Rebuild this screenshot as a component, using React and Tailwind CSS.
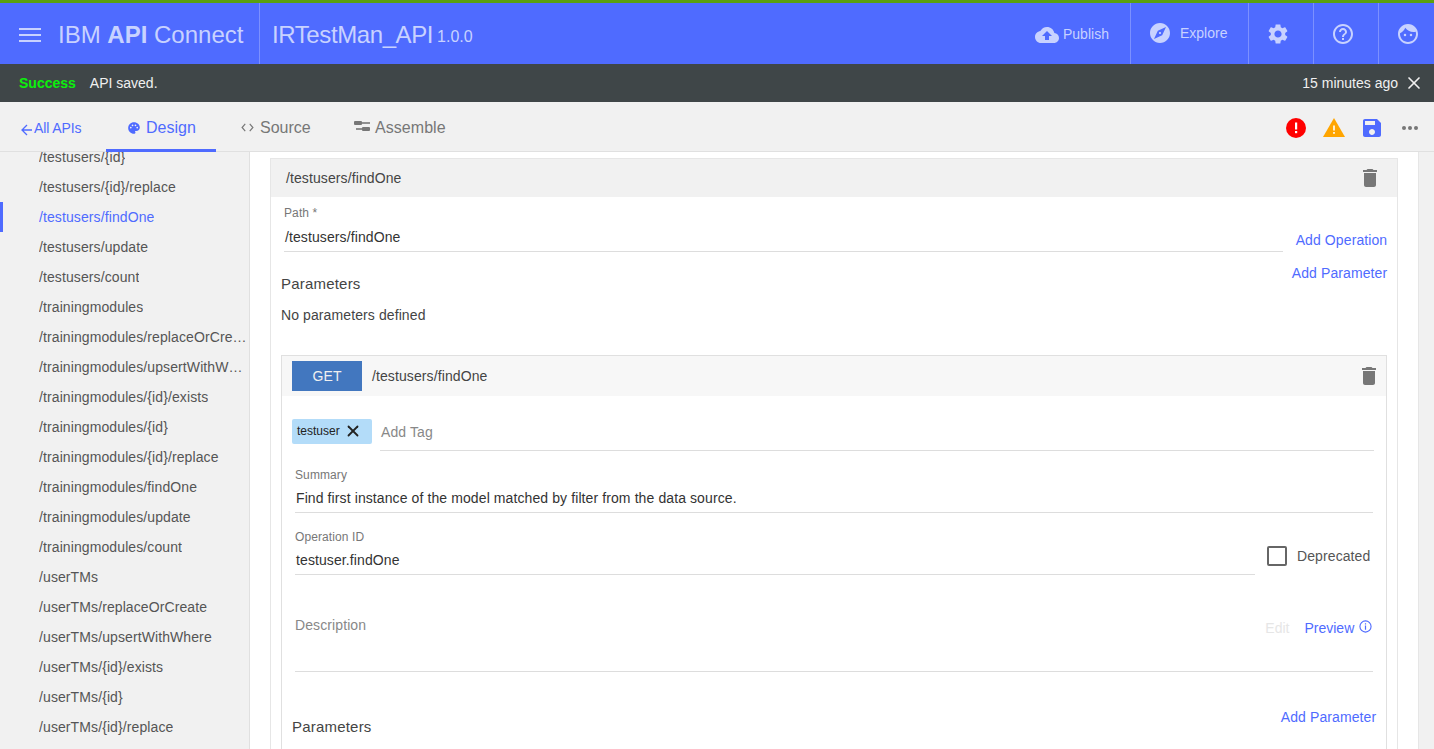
import { X } from "lucide-react";

const navItems = [
  "/testusers/{id}",
  "/testusers/{id}/replace",
  "/testusers/findOne",
  "/testusers/update",
  "/testusers/count",
  "/trainingmodules",
  "/trainingmodules/replaceOrCreate",
  "/trainingmodules/upsertWithWhere",
  "/trainingmodules/{id}/exists",
  "/trainingmodules/{id}",
  "/trainingmodules/{id}/replace",
  "/trainingmodules/findOne",
  "/trainingmodules/update",
  "/trainingmodules/count",
  "/userTMs",
  "/userTMs/replaceOrCreate",
  "/userTMs/upsertWithWhere",
  "/userTMs/{id}/exists",
  "/userTMs/{id}",
  "/userTMs/{id}/replace",
];

const TrashIcon = () => (
  <svg viewBox="0 0 24 24" className="w-[24px] h-[24px] fill-[#777]">
    <path d="M6 19c0 1.1.9 2 2 2h8c1.1 0 2-.9 2-2V7H6v12zM19 4h-3.5l-1-1h-5l-1 1H5v2h14V4z" />
  </svg>
);

const Header = () => (
  <header className="h-[64px] shrink-0 bg-[#4f6bff] border-t-[3px] border-[#5aa00f] flex items-stretch text-[#c8d2ff]">
    <div className="w-[260px] shrink-0 flex items-center border-r border-[#7c90ff] h-[66px] pl-[19px] pb-[2px]">
      <svg viewBox="0 0 22 14" className="w-[22px] h-[14px] fill-[#c8d2ff]">
        <rect y="0" width="22" height="2" />
        <rect y="6" width="22" height="2" />
        <rect y="12" width="22" height="2" />
      </svg>
      <span className="ml-[17px] text-[24px] leading-none whitespace-nowrap">
        IBM <b>API</b> Connect
      </span>
    </div>
    <div className="flex-1 flex items-center pl-[12px] pt-[2px]">
      <span className="text-[24px] leading-none tracking-[-0.4px]">IRTestMan_API</span>
      <span className="ml-[4px] text-[16px] leading-none mt-[5px]">1.0.0</span>
    </div>
    <div className="flex items-stretch text-[14px]">
      <div className="w-[96px] flex items-center pt-[2px]">
        <svg viewBox="0 0 24 24" className="w-[24px] h-[24px] fill-[#c8d2ff] ml-[1px]">
          <path d="M19.35 10.04C18.67 6.59 15.64 4 12 4 9.11 4 6.6 5.64 5.35 8.04 2.34 8.36 0 10.91 0 14c0 3.31 2.69 6 6 6h13c2.76 0 5-2.24 5-5 0-2.64-2.05-4.78-4.65-4.96zM14 13v4h-4v-4H7l5-5 5 5h-3z" />
        </svg>
        <span className="ml-[4px]">Publish</span>
      </div>
      <div className="w-[118px] flex items-center border-l border-[#7c90ff] pl-[17px] pb-[1px]">
        <svg viewBox="0 0 24 24" className="w-[24px] h-[24px] fill-[#c8d2ff]">
          <path d="M12 10.9c-.61 0-1.1.49-1.1 1.1s.49 1.1 1.1 1.1c.61 0 1.1-.49 1.1-1.1s-.49-1.1-1.1-1.1zM12 2C6.48 2 2 6.48 2 12s4.48 10 10 10 10-4.48 10-10S17.52 2 12 2zm2.19 12.19L6 18l3.81-8.19L18 6l-3.81 8.19z" />
        </svg>
        <span className="ml-[8px]">Explore</span>
      </div>
      <div className="w-[65px] flex items-center justify-center border-l border-[#7c90ff] pr-[7px]">
        <svg viewBox="0 0 24 24" className="w-[24px] h-[24px] fill-[#c8d2ff]">
          <path d="M19.14 12.94c.04-.3.06-.61.06-.94 0-.32-.02-.64-.07-.94l2.03-1.58c.18-.14.23-.41.12-.61l-1.92-3.32c-.12-.22-.37-.29-.59-.22l-2.39.96c-.5-.38-1.03-.7-1.62-.94l-.36-2.54c-.04-.24-.24-.41-.48-.41h-3.84c-.24 0-.43.17-.47.41l-.36 2.54c-.59.24-1.13.57-1.62.94l-2.39-.96c-.22-.08-.47 0-.59.22L2.74 8.87c-.12.21-.08.47.12.61l2.03 1.58c-.05.3-.09.63-.09.94s.02.64.07.94l-2.03 1.58c-.18.14-.23.41-.12.61l1.92 3.32c.12.22.37.29.59.22l2.39-.96c.5.38 1.03.7 1.62.94l.36 2.54c.05.24.24.41.48.41h3.84c.24 0 .44-.17.47-.41l.36-2.54c.59-.24 1.13-.56 1.62-.94l2.39.96c.22.08.47 0 .59-.22l1.92-3.32c.12-.22.07-.47-.12-.61l-2.01-1.58zM12 15.6c-1.98 0-3.6-1.62-3.6-3.6s1.62-3.6 3.6-3.6 3.6 1.62 3.6 3.6-1.62 3.6-3.6 3.6z" />
        </svg>
      </div>
      <div className="w-[65px] flex items-center justify-center border-l border-[#7c90ff] pr-[7px]">
        <svg viewBox="0 0 24 24" className="w-[24px] h-[24px] fill-[#c8d2ff]">
          <path d="M11 18h2v-2h-2v2zm1-16C6.48 2 2 6.48 2 12s4.48 10 10 10 10-4.48 10-10S17.52 2 12 2zm0 18c-4.41 0-8-3.59-8-8s3.59-8 8-8 8 3.59 8 8-3.59 8-8 8zm0-14c-2.21 0-4 1.79-4 4h2c0-1.1.9-2 2-2s2 .9 2 2c0 2-3 1.75-3 5h2c0-2.25 3-2.5 3-5 0-2.21-1.79-4-4-4z" />
        </svg>
      </div>
      <div className="w-[56px] flex items-center pl-[17px] border-l border-[#7c90ff]">
        <svg viewBox="0 0 24 24" className="w-[24px] h-[24px] fill-[#c8d2ff]">
          <path d="M9 11.75a1.25 1.25 0 1 0 0 2.5 1.25 1.25 0 0 0 0-2.5zm6 0a1.25 1.25 0 1 0 0 2.5 1.25 1.25 0 0 0 0-2.5zM12 2C6.48 2 2 6.48 2 12s4.48 10 10 10 10-4.48 10-10S17.52 2 12 2zm0 18c-4.41 0-8-3.59-8-8 0-.29.02-.58.05-.86 2.36-1.05 4.23-2.98 5.21-5.37C11.07 8.33 14.05 10 17.42 10c.78 0 1.53-.09 2.25-.26.21.71.33 1.47.33 2.26 0 4.41-3.59 8-8 8z" />
        </svg>
      </div>
    </div>
  </header>
);

const Banner = () => (
  <div className="h-[38px] shrink-0 bg-[#3f4648] flex items-center pl-[19px] pr-[10px] text-[14px] text-[#f0f0f0]">
    <span className="font-bold text-[#0cf00c]">Success</span>
    <span className="ml-[14px]">API saved.</span>
    <span className="ml-auto">15 minutes ago</span>
    <X className="ml-[6px] w-[20px] h-[20px]" strokeWidth={2} />
  </div>
);

const Tabs = () => (
  <div className="h-[50px] shrink-0 bg-[#f1f1f1] border-b border-[#e0e0e0] flex items-stretch relative">
    <div className="w-[106px] flex items-center pl-[20px] pt-[4px] text-[14px] text-[#4f6bff] tracking-[-0.1px]">
      <svg viewBox="0 0 14 14" className="w-[14px] h-[14px] fill-none stroke-[#4f6bff] stroke-[1.3] mt-[2px]">
        <path d="M12 7H2M7 2 2 7l5 5" />
      </svg>
      All APIs
    </div>
    <div className="w-[110px] flex items-center pl-[21px] text-[16px] text-[#4f6bff] border-b-[3px] border-[#4f6bff] h-[50px] pt-[5px]">
      <svg viewBox="0 0 24 24" className="w-[14px] h-[14px] fill-[#4f6bff] mr-[5px]">
        <path d="M12 2C6.49 2 2 6.49 2 12s4.49 10 10 10c1.38 0 2.5-1.12 2.5-2.5 0-.61-.23-1.2-.64-1.67a.528.528 0 0 1-.13-.33c0-.28.22-.5.5-.5H16c3.31 0 6-2.69 6-6 0-4.96-4.49-9-10-9zm5.5 11c-.83 0-1.5-.67-1.5-1.5s.67-1.5 1.5-1.500 1.5.67 1.5 1.500-.67 1.5-1.5 1.5zm-3-4c-.83 0-1.5-.67-1.5-1.5S13.67 6 14.500 6s1.5.67 1.5 1.500S15.330 9 14.500 9zM5 11.500c0-.83.67-1.500 1.500-1.500S8 10.670 8 11.500 7.330 13 6.500 13 5 12.330 5 11.500zm6-4c0 .83-.67 1.500-1.500 1.500S8 8.330 8 7.500 8.670 6 9.500 6s1.500.67 1.500 1.500z" />
      </svg>
      Design
    </div>
    <div className="w-[113px] flex items-center pl-[25px] pt-[2px] text-[16px] text-[#777]">
      <svg viewBox="0 0 14 10" className="w-[13px] h-[9px] fill-none stroke-[#777] stroke-[1.3] mr-[6px]">
        <path d="M4.500 1 1 5l3.500 4M9.500 1 13 5 9.500 9" />
      </svg>
      Source
    </div>
    <div className="flex items-center pl-[25px] pt-[2px] text-[16px] text-[#777] tracking-[0.05px]">
      <svg viewBox="0 0 16 10" className="w-[16px] h-[10px] fill-[#777] mr-[5px] mb-[3px]">
        <rect x="0" y="0" width="8" height="4" rx="1" />
        <rect x="8" y="1.200" width="8" height="1.600" />
        <rect x="2" y="7.200" width="6" height="1.600" />
        <rect x="8" y="6" width="8" height="4" rx="1" />
      </svg>
      Assemble
    </div>
    <div className="ml-auto flex items-center pr-[16px] pt-[2px]">
      <svg viewBox="0 0 20 20" className="w-[20px] h-[20px]">
        <circle cx="10" cy="10" r="10" fill="#f00" />
        <rect x="9" y="4.500" width="2.200" height="7" fill="#fff" />
        <rect x="9" y="13" width="2.200" height="2.200" fill="#fff" />
      </svg>
      <svg viewBox="0 0 22 19" className="ml-[17px] w-[22px] h-[19px]">
        <path d="M11 0 22 19H0z" fill="#ffa500" />
        <rect x="10.200" y="7.500" width="1.600" height="5" fill="#fff" />
        <rect x="10.200" y="14" width="1.600" height="1.800" fill="#fff" />
      </svg>
      <svg viewBox="3 3 18 18" className="ml-[18px] w-[18px] h-[18px] fill-[#4f6bff]">
        <path d="M17 3H5c-1.110 0-2 .9-2 2v14c0 1.100.89 2 2 2h14c1.100 0 2-.9 2-2V7l-4-4zm-5 16c-1.660 0-3-1.340-3-3s1.340-3 3-3 3 1.340 3 3-1.340 3-3 3zm3-10H5V5h10v4z" />
      </svg>
      <svg viewBox="0 0 16 4" className="ml-[21px] w-[16px] h-[4px] fill-[#777]">
        <circle cx="2" cy="2" r="2" />
        <circle cx="8" cy="2" r="2" />
        <circle cx="14" cy="2" r="2" />
      </svg>
    </div>
  </div>
);

const Sidebar = () => (
  <aside className="w-[250px] shrink-0 bg-[#f1f1f1] border-r border-[#e0e0e0] overflow-hidden text-[14px] text-[#555] tracking-[0.1px]">
    <div className="mt-[-10px]">
      {navItems.map((item) => (
        <div
          key={item}
          className={
            item === "/testusers/findOne"
              ? "h-[30px] flex items-center pl-[36px] border-l-[3px] border-[#4f6bff] text-[#4f6bff]"
              : "h-[30px] flex items-center pl-[39px]"
          }
        >
          <span className="truncate">{item}</span>
        </div>
      ))}
    </div>
  </aside>
);

const Field = ({ label, value, className, inputClass = "h-[31px]" }) => (
  <div className={className}>
    <div className="text-[12px] leading-[14px] text-[#777]">{label}</div>
    <div className={`${inputClass} flex items-center pt-[4px] pl-[1px] border-b border-[#ddd] text-[14px] text-[#333]`}>{value}</div>
  </div>
);

const Operation = () => (
  <div className="mt-[29px] ml-[10px] mr-[10px] border border-[#e0e0e0] border-b-0 h-[600px]">
    <div className="h-[40px] bg-[#f7f7f7] flex items-center pl-[10px] pr-[5px] pt-[1px]">
      <div className="w-[70px] h-[30px] bg-[#4277bf] text-[#f0f0f0] text-[14px] flex items-center justify-center">GET</div>
      <span className="ml-[10px] text-[14px] text-[#444]">/testusers/findOne</span>
      <span className="ml-auto"><TrashIcon /></span>
    </div>
    <div className="pl-[10px] pr-[12px]">
      <div className="flex mt-[18px] items-start">
        <div className="w-[80px] h-[25px] mt-[5px] bg-[#b3dcf9] rounded-[2px] flex items-center pl-[5px] text-[12px] text-[#222] tracking-normal">
          testuser
          <X className="ml-[4px] w-[18px] h-[18px]" strokeWidth={2.4} />
        </div>
        <div className="ml-[8px] flex-1 h-[37px] border-b border-[#ddd] flex items-center pl-[1px] pt-[2px] text-[14px] text-[#888]">Add Tag</div>
      </div>
      <Field label="Summary" value="Find first instance of the model matched by filter from the data source." className="mt-[17px] ml-[3px] mr-[1px]" />
      <div className="flex mt-[17px] items-start">
        <Field label="Operation ID" value="testuser.findOne" className="ml-[3px] w-[960px]" />
        <div className="ml-[12px] mt-[16px] flex items-center text-[14px] text-[#555]">
          <div className="w-[20px] h-[20px] border-2 border-[#666] rounded-[2px]"></div>
          <span className="ml-[10px]">Deprecated</span>
        </div>
      </div>
      <div className="mt-[28px] ml-[3px] mr-[1px] h-[69px] border-b border-[#ddd] flex items-start pt-[12px] text-[14px]">
        <span className="text-[#888]">Description</span>
        <span className="ml-auto mt-[3px] text-[#e6e6e6] tracking-normal">Edit</span>
        <span className="ml-[15px] mt-[3px] text-[#4f6bff] tracking-normal">Preview</span>
        <svg viewBox="0 0 14 14" className="ml-[5px] mt-[5px] mr-[1px] w-[13px] h-[13px] fill-none stroke-[#4f6bff]">
          <circle cx="7" cy="7" r="6" strokeWidth="1.200" />
          <path d="M7 6v4.500M7 3.500v1.300" strokeWidth="1.300" />
        </svg>
      </div>
      <div className="flex items-start mt-[35px] mr-[-2px] text-[#444]">
        <span className="text-[15px] mt-[9px] tracking-[0.2px]">Parameters</span>
        <span className="ml-auto text-[14px] text-[#4f6bff]">Add Parameter</span>
      </div>
    </div>
  </div>
);

const Main = () => (
  <main className="flex-1 bg-white overflow-hidden flex items-start tracking-[0.1px]">
    <div className="w-[1148px] ml-[20px] mt-[6px] border border-[#e6e6e6]">
      <div className="h-[38px] bg-[#f1f1f1] flex items-center pl-[15px] pr-[15px] text-[14px] text-[#444]">
        /testusers/findOne
        <span className="ml-auto"><TrashIcon /></span>
      </div>
      <div className="flex items-start mt-[9px]">
        <Field label="Path *" value="/testusers/findOne" className="ml-[13px] w-[999px]" inputClass="h-[32px]" />
        <span className="ml-auto mr-[10px] mt-[24px] text-[14px] text-[#4f6bff]">Add Operation</span>
      </div>
      <div className="flex items-start mt-[11px] pl-[10px] pr-[10px]">
        <span className="text-[15px] text-[#444] mt-[10px] tracking-[0.2px]">Parameters</span>
        <span className="ml-auto text-[14px] text-[#4f6bff]">Add Parameter</span>
      </div>
      <div className="pl-[10px] mt-[9px] text-[14px] text-[#444]">No parameters defined</div>
      <Operation />
    </div>
    <div className="ml-[20px] w-[16px] self-stretch border-l border-[#e6e6e6] bg-[#f1f1f1]"></div>
  </main>
);

export default function App() {
  return (
    <div className="h-[749px] w-[1434px] overflow-hidden flex flex-col font-['Liberation_Sans',Arial,sans-serif] bg-white">
      <Header />
      <Banner />
      <Tabs />
      <div className="flex-1 min-h-0 flex">
        <Sidebar />
        <Main />
      </div>
    </div>
  );
}
